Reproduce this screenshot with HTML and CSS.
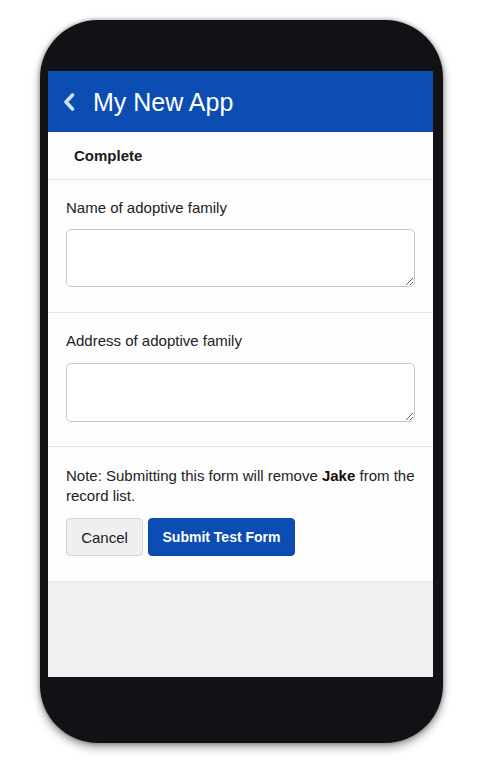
FILE: index.html
```html
<!DOCTYPE html>
<html>
<head>
<meta charset="utf-8">
<link rel="stylesheet" href="styles.css">
</head>
<body>
<div class="phone">
  <div class="screen">
    <header class="appbar">
      <svg class="back" width="14" height="18" viewBox="0 0 14 18"><path d="M10.5 2 L4 9 L10.5 16" fill="none" stroke="#cfe0fb" stroke-width="3.6" stroke-linecap="round" stroke-linejoin="round"/></svg>
      <span class="title">My New App</span>
    </header>
    <div class="subbar">Complete</div>
    <section class="field">
      <label class="label">Name of adoptive family</label>
      <textarea class="input"></textarea>
    </section>
    <section class="field field-2">
      <label class="label">Address of adoptive family</label>
      <textarea class="input"></textarea>
    </section>
    <section class="actions">
      <p class="note">Note: Submitting this form will remove <b>Jake</b> from the record list.</p>
      <div class="buttons">
        <button class="btn cancel">Cancel</button>
        <button class="btn submit">Submit Test Form</button>
      </div>
    </section>
    <div class="filler"></div>
  </div>
</div>
</body>
</html>
```
FILE: styles.css
```css
* { box-sizing: border-box; }
html, body { margin: 0; padding: 0; background: #ffffff; }
body {
  font-family: "Liberation Sans", Arial, sans-serif;
  padding: 20px 0 0 40px;
  width: 480px;
  height: 771px;
  overflow: hidden;
}
.phone {
  width: 403px;
  height: 723px;
  background: #121115;
  border-radius: 58px;
  padding: 51px 10px 0 8px;
  box-shadow: 0 4px 10px rgba(0,0,0,0.4), 0 0 4px rgba(0,0,0,0.35);
}
.screen {
  width: 385px;
  height: 606px;
  background: #fdfdfe;
  display: flex;
  flex-direction: column;
  overflow: hidden;
}
.appbar {
  height: 61px;
  background: #0b4db3;
  display: flex;
  align-items: center;
  padding-left: 14px;
  flex-shrink: 0;
}
.title {
  color: #ffffff;
  font-size: 25px;
  margin-left: 17px;
  line-height: 30px;
  padding-top: 1px;
}
.subbar {
  height: 48px;
  display: flex;
  align-items: center;
  padding-left: 26px;
  font-size: 15px;
  font-weight: bold;
  color: #1a1a1a;
  border-bottom: 1px solid #e6e6e9;
  flex-shrink: 0;
}
.field {
  padding: 18px 18px 25px;
  border-bottom: 1px solid #e6e6e9;
  display: flex;
  flex-direction: column;
  gap: 11px;
  flex-shrink: 0;
}
.field-2 { gap: 12px; padding-bottom: 24px; }
.label {
  font-size: 15px;
  line-height: 20px;
  color: #222;
}
.input {
  height: 58px;
  width: 100%;
  border: 1px solid #c9c9cc;
  border-radius: 5px;
  background: #fff;
  resize: vertical;
  margin: 0;
  font-family: inherit;
}
.field-2 .input { height: 59px; }
.actions {
  padding: 19px 18px 25px;
  border-bottom: 1px solid #e6e6e9;
  flex-shrink: 0;
}
.note {
  margin: 0;
  font-size: 15px;
  line-height: 20px;
  color: #222;
}
.note b { color: #111; }
.buttons {
  display: flex;
  gap: 5px;
  margin-top: 12px;
}
.btn {
  height: 38px;
  font-family: inherit;
  font-size: 15px;
  border-radius: 4px;
  padding: 0;
  margin: 0;
  white-space: nowrap;
}
.cancel {
  width: 77px;
  background: #efeff1;
  border: 1px solid #d6d6d9;
  color: #1a1a1a;
}
.submit {
  width: 147px;
  background: #0b4db3;
  border: 1px solid #0a47a6;
  color: #fff;
  font-size: 14px;
  font-weight: bold;
}
.filler {
  flex: 1;
  background: #f0f0f2;
}
```
